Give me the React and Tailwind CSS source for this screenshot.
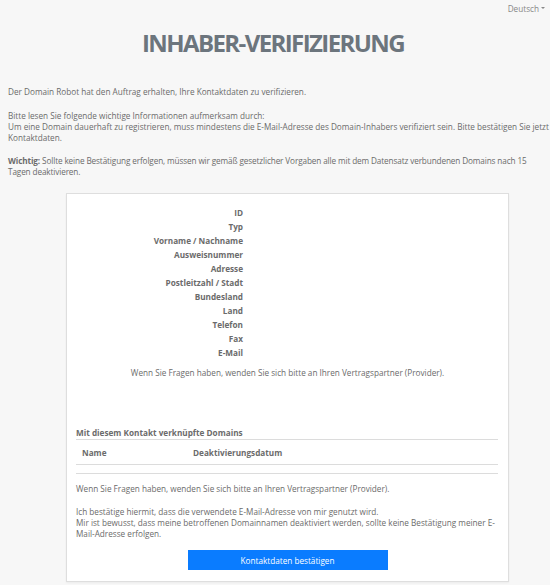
export default function App() {
  const labels = [
    "ID",
    "Typ",
    "Vorname / Nachname",
    "Ausweisnummer",
    "Adresse",
    "Postleitzahl / Stadt",
    "Bundesland",
    "Land",
    "Telefon",
    "Fax",
    "E-Mail",
  ];
  return (
    <div
      className="w-[550px] h-[585px] overflow-hidden bg-[#f7f7f7] text-[#6b6b6b]"
      style={{ fontFamily: '"Open Sans", "Noto Sans", sans-serif' }}
    >
      <div className="flex justify-end pr-[5px] pt-[2px] h-[14px]">
        <span className="text-[8.2px] leading-[11px] text-[#888] flex items-center gap-[2px]">
          Deutsch
          <span className="inline-block w-0 h-0 border-l-[2px] border-r-[2px] border-t-[2px] border-l-transparent border-r-transparent border-t-[#888]"></span>
        </span>
      </div>
      <h1 className="w-[546px] text-center mt-[13px] text-[24px] leading-[32px] font-bold tracking-[-1.6px] text-[#6c757d]">
        INHABER-VERIFIZIERUNG
      </h1>
      <div className="pl-[8px] mt-[27px] text-[8.2px] leading-[11px] whitespace-nowrap">
        <p className="mb-[13px]">
          Der Domain Robot hat den Auftrag erhalten, Ihre Kontaktdaten zu verifizieren.
        </p>
        <p className="mb-[12px]">
          Bitte lesen Sie folgende wichtige Informationen aufmerksam durch:
          <br />
          Um eine Domain dauerhaft zu registrieren, muss mindestens die E-Mail-Adresse des Domain-Inhabers verifiziert sein. Bitte bestätigen Sie jetzt Ihre
          <br />
          Kontaktdaten.
        </p>
        <p className="tracking-[-0.12px]">
          <span className="font-bold">Wichtig:</span> Sollte keine Bestätigung erfolgen, müssen wir gemäß gesetzlicher Vorgaben alle mit dem Datensatz verbundenen Domains nach 15
          <br />
          Tagen deaktivieren.
        </p>
      </div>
      <div className="ml-[66px] mt-[16px] w-[443px] bg-white border border-[#dedede] shadow-[0_1px_2px_rgba(0,0,0,0.05)] px-[9px] pt-[11px] pb-[11px] text-[8.2px] leading-[11px]">
        <div className="flex flex-col">
          {labels.map((l) => (
            <div key={l} className="flex h-[14px] items-center">
              <div className="w-[167px] text-right font-bold text-[#6b6b6b]">{l}</div>
            </div>
          ))}
        </div>
        <div className="text-center mt-[6px] h-[14px] flex items-center justify-center">
          Wenn Sie Fragen haben, wenden Sie sich bitte an Ihren Vertragspartner (Provider).
        </div>
        <div className="mt-[48px] font-bold pb-[1px] border-b border-[#dcdcdc] mr-[1px]">
          Mit diesem Kontakt verknüpfte Domains
        </div>
        <div className="mr-[1px]">
          <div className="flex h-[25px] items-center font-bold border-b border-[#dcdcdc]">
            <div className="w-[117px] pl-[6px]">Name</div>
            <div>Deaktivierungsdatum</div>
          </div>
          <div className="h-[9px] border-b border-[#dcdcdc]"></div>
        </div>
        <p className="mt-[9px]">
          Wenn Sie Fragen haben, wenden Sie sich bitte an Ihren Vertragspartner (Provider).
        </p>
        <p className="mt-[12px]">
          Ich bestätige hiermit, dass die verwendete E-Mail-Adresse von mir genutzt wird.
          <br />
          Mir ist bewusst, dass meine betroffenen Domainnamen deaktiviert werden, sollte keine Bestätigung meiner E-
          <br />
          Mail-Adresse erfolgen.
        </p>
        <div className="flex justify-center mt-[11px]">
          <button className="w-[200px] h-[20px] bg-[#0a7cff] text-white text-[8.2px] leading-[11px]">
            Kontaktdaten bestätigen
          </button>
        </div>
      </div>
    </div>
  );
}
